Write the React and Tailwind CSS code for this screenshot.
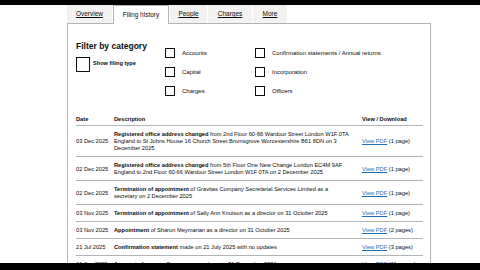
import React from 'react';

const tabs = [
  { label: 'Overview', w: 'w-[45px]' },
  { label: 'Filing history', w: 'w-[56px]', active: true },
  { label: 'People', w: 'w-[37px]' },
  { label: 'Charges', w: 'w-[44px]' },
  { label: 'More', w: 'w-[34px]' },
];

const Box = ({ big }) => (
  <span
    className={
      big
        ? 'block w-[14px] h-[15px] border-[1.5px] border-[#0b0c0c] bg-white shrink-0'
        : 'block w-[10px] h-[10px] border border-[#0b0c0c] bg-white shrink-0'
    }
  />
);

const Check = ({ label }) => (
  <div className="flex items-center gap-[7px] h-[10px]">
    <Box />
    <span className="text-[6px] leading-[7px]">{label}</span>
  </div>
);

const rows = [
  {
    date: '03 Dec 2025',
    title: 'Registered office address changed',
    lines: [
      ' from 2nd Floor 60-66 Wardour Street London W1F 0TA',
      'England to St Johns House 16 Church Street Bromsgrove Worcestershire B61 8DN on 3',
      'December 2025',
    ],
    pages: '(1 page)',
  },
  {
    date: '02 Dec 2025',
    title: 'Registered office address changed',
    lines: [
      ' from 5th Floor One New Change London EC4M 9AF',
      'England to 2nd Floor 60-66 Wardour Street London W1F 0TA on 2 December 2025',
    ],
    pages: '(1 page)',
  },
  {
    date: '02 Dec 2025',
    title: 'Termination of appointment',
    lines: [
      ' of Gravitas Company Secretarial Services Limited as a',
      'secretary on 2 December 2025',
    ],
    pages: '(1 page)',
  },
  {
    date: '03 Nov 2025',
    title: 'Termination of appointment',
    lines: [' of Sally Ann Knutson as a director on 31 October 2025'],
    pages: '(1 page)',
  },
  {
    date: '03 Nov 2025',
    title: 'Appointment',
    lines: [' of Sharon Meymarian as a director on 31 October 2025'],
    pages: '(2 pages)',
  },
  {
    date: '21 Jul 2025',
    title: 'Confirmation statement',
    lines: [' made on 21 July 2025 with no updates'],
    pages: '(3 pages)',
  },
  {
    date: '16 Jun 2025',
    title: 'Accounts for a small company',
    lines: [' made up to 31 December 2024'],
    pages: '(11 pages)',
  },
];

export default function App() {
  return (
    <div
      className="h-[270px] w-[480px] flex flex-col bg-white text-[#0b0c0c] overflow-hidden"
      style={{ fontFamily: '"Liberation Sans", Arial, sans-serif' }}
    >
      <div className="h-[5px] bg-black shrink-0" />

      <div className="flex-1 overflow-hidden pl-[67px]">
        {/* tabs */}
        <div className="flex gap-[1px] h-[18px] relative z-10">
          {tabs.map((t) =>
            t.active ? (
              <div
                key={t.label}
                className={`${t.w} h-[19px] bg-white border-t border-x border-[#b1b4b6] flex items-center justify-center text-[6.5px]`}
              >
                {t.label}
              </div>
            ) : (
              <div
                key={t.label}
                className={`${t.w} h-[18px] bg-[#f3f2f1] flex items-center justify-center text-[6.5px] underline`}
              >
                {t.label}
              </div>
            )
          )}
        </div>

        {/* panel */}
        <div className="w-[364px] border border-[#b1b4b6] pl-[8px] pr-[7px] pt-[17px]">
          <div className="flex">
            <div className="w-[89px]">
              <h2 className="text-[8.5px] leading-[10px] font-bold">Filter by category</h2>
              <div className="flex items-start gap-[3px] mt-[6px]">
                <Box big />
                <span className="text-[5.6px] font-bold leading-[7px] mt-[3px]">Show filing type</span>
              </div>
            </div>
            <div className="w-[90px] flex flex-col gap-[9px] mt-[7px]">
              <Check label="Accounts" />
              <Check label="Capital" />
              <Check label="Charges" />
            </div>
            <div className="flex flex-col gap-[9px] mt-[7px]">
              <Check label="Confirmation statements / Annual returns" />
              <Check label="Incorporation" />
              <Check label="Officers" />
            </div>
          </div>

          {/* table */}
          <table className="w-[347px] mt-[17px] border-collapse text-[5.7px] leading-[7px] table-fixed">
            <colgroup>
              <col className="w-[38px]" />
              <col className="w-[248px]" />
              <col className="w-[61px]" />
            </colgroup>
            <thead>
              <tr className="border-b border-[#b1b4b6]">
                <th className="text-left font-bold pt-[3px] pb-[2px]">Date</th>
                <th className="text-left font-bold pt-[3px] pb-[2px]">Description</th>
                <th className="text-left font-bold pt-[3px] pb-[2px]">View / Download</th>
              </tr>
            </thead>
            <tbody>
              {rows.map((r, i) => (
                <tr key={i} className="border-b border-[#b1b4b6]">
                  <td className="align-middle pt-[5px] pb-[4px] whitespace-nowrap">{r.date}</td>
                  <td className="align-middle pt-[5px] pb-[4px] pr-[4px] whitespace-nowrap">
                    <span className="font-bold">{r.title}</span>
                    {r.lines.map((l, j) => (
                      <React.Fragment key={j}>
                        {j > 0 && <br />}
                        {l}
                      </React.Fragment>
                    ))}
                  </td>
                  <td className="align-middle pt-[5px] pb-[4px] whitespace-nowrap">
                    <a className="text-[#1d70b8] underline">View PDF</a> {r.pages}
                  </td>
                </tr>
              ))}
            </tbody>
          </table>
        </div>
      </div>

      <div className="h-[7px] bg-black shrink-0" />
    </div>
  );
}
